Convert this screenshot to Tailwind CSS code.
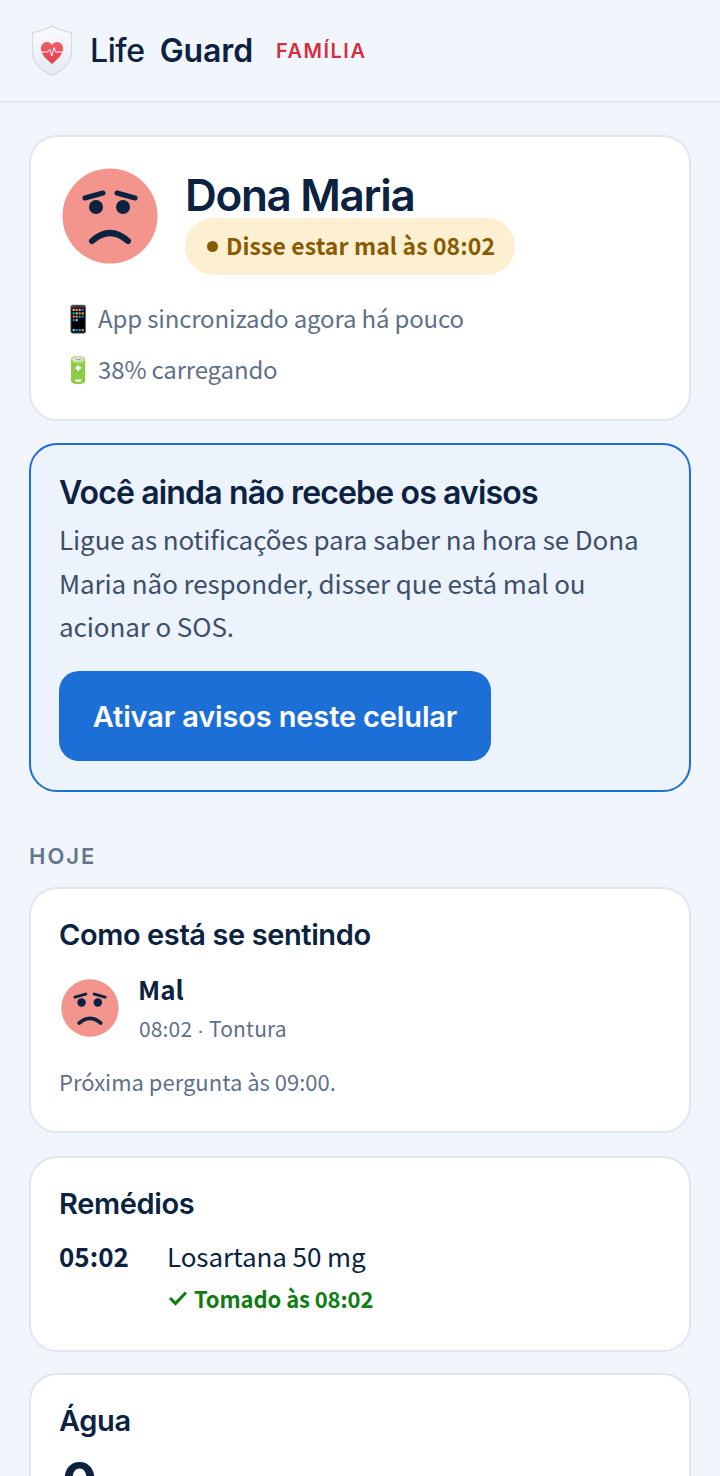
<!DOCTYPE html>
<html lang='pt-BR'>
<head>
	<meta charset='UTF-8'>
	<meta name='viewport' content='width=device-width, initial-scale=1.0'>
	<title>LifeGuard Família</title>
	<script src="https://cdn.jsdelivr.net/npm/@tailwindcss/browser@4"></script>
</head>
<body class='bg-[#f1f5fc] h-[1476px] overflow-hidden font-["Noto_Sans_CJK_SC",sans-serif] text-[#0b2240]'>
	<!-- Header -->
	<header class='h-[103px] border-b-2 border-[#e1e6ee] flex items-center pl-[31px]'>
		<svg width='42' height='52' viewBox='0 0 42 52' class='mr-[17px]'>
			<defs>
				<linearGradient id='shield' x1='0' y1='0' x2='0' y2='1'>
					<stop offset='0' stop-color='#fbfcfe'/>
					<stop offset='1' stop-color='#e3e9f2'/>
				</linearGradient>
				<linearGradient id='heart' x1='0' y1='0' x2='0' y2='1'>
					<stop offset='0' stop-color='#f2606a'/>
					<stop offset='1' stop-color='#e73c49'/>
				</linearGradient>
			</defs>
			<path d='M21 1 C27 4.500 33 6.500 40.500 7.500 V27 C40.500 38 31 46 21 50.500 C11 46 1.500 38 1.500 27 V7.500 C9 6.500 15 4.500 21 1Z' fill='url(#shield)' stroke='#d3d9e2' stroke-width='1.200'/>
			<path d='M21 39 C16 34.500 10 30 10 23.500 C10 19.500 13 17 16 17 C18.300 17 20 18.300 21 20 C22 18.300 23.700 17 26 17 C29 17 32 19.500 32 23.500 C32 30 26 34.500 21 39Z' fill='url(#heart)'/>
			<path d='M10.500 27 H17 L18.800 24 L20.800 31 L23 22.500 L24.800 27 H31.500' fill='none' stroke='#fff' stroke-width='1'/>
		</svg>
		<div class='font-["Inter",sans-serif] text-[32px] leading-none font-medium tracking-[-.4px]'>Life</div>
		<div class='font-["Inter",sans-serif] text-[32px] leading-none font-semibold ml-[15px] tracking-[-.1px]'>Guard</div>
		<div class='font-["Inter",sans-serif] text-[20px] leading-none font-semibold text-[#d32f3f] tracking-[1.5px] ml-[23px]'>FAMÍLIA</div>
	</header>

	<main class='px-[29px] pt-[32px] flex flex-col'>
		<!-- Status card -->
		<section class='bg-white border-2 border-[#e1e6ee] rounded-[28px] h-[286px] pl-[31px] pt-[31px]'>
			<div class='flex'>
				<svg width='96' height='96' viewBox='0 0 96 96' class='shrink-0'>
					<circle cx='48' cy='48' r='47.500' fill='#f3958d'/>
					<path d='M23 30 L41 25M73 30 L55 25' stroke='#0b2240' stroke-width='5' stroke-linecap='round' fill='none'/>
					<circle cx='34' cy='39' r='7' fill='#0b2240'/>
					<circle cx='61' cy='39' r='7' fill='#0b2240'/>
					<path d='M30 73 Q48 57 66 73' stroke='#0b2240' stroke-width='6' stroke-linecap='round' fill='none'/>
				</svg>
				<div class='ml-[27px]'>
					<h1 class='font-["Inter",sans-serif] mt-[2px] text-[44px] leading-[50px] font-semibold tracking-[-1.3px]'>Dona Maria</h1>
					<div class='mt-[-2px] h-[57px] w-[330px] rounded-full bg-[#fdf0d2] text-[#8a5a00] text-[23px] tracking-[.08px] font-bold flex items-center pl-[22px] pb-[3px]'>
						<span class='w-[11px] h-[11px] rounded-full bg-[#8a5a00] mr-[8px] mt-[3px]'></span>
						Disse estar mal às 08:02
					</div>
				</div>
			</div>
			<p class='mt-[17px] text-[24px] leading-[49.500px] text-[#5f7089] tracking-[-.16px]'><span class='text-[26px] mr-[-1px]'>📱</span> App sincronizado agora há pouco</p>
			<p class='text-[24px] leading-[49.500px] text-[#5f7089] tracking-[-.16px]'><span class='text-[26px] mr-[-1px]'>🔋</span> 38% carregando</p>
		</section>

		<!-- Notifications -->
		<section class='mt-[22px] bg-[#ecf3fd] border-2 border-[#1d6fd8] rounded-[28px] h-[349px] px-[28px] pt-[29px]'>
			<h2 class='font-["Inter",sans-serif] text-[32px] leading-[38px] font-semibold tracking-[-.85px]'>Você ainda não recebe os avisos</h2>
			<p class='text-[26px] leading-[43.500px] text-[#3d4f69] mt-[5px] tracking-[-.1px]'>Ligue as notificações para saber na hora se Dona Maria não responder, disser que está mal ou acionar o SOS.</p>
			<button class='mt-[23px] h-[90px] w-[432px] rounded-[20px] bg-[#1d6fd8] text-white font-["Inter",sans-serif] text-[29px] font-semibold tracking-[-.15px] pt-[2px]'>Ativar avisos neste celular</button>
		</section>

		<div class='font-["Inter",sans-serif] mt-[51px] text-[22px] leading-[26px] font-semibold tracking-[2px] text-[#64748b]'>HOJE</div>

		<!-- Feeling -->
		<section class='mt-[18px] bg-white border-2 border-[#e1e6ee] rounded-[28px] h-[246px] px-[28px] pt-[28px]'>
			<h2 class='font-["Inter",sans-serif] text-[29px] leading-[36px] font-semibold tracking-[-.4px]'>Como está se sentindo</h2>
			<div class='flex mt-[18px]'>
				<svg width='58' height='58' viewBox='0 0 96 96' class='shrink-0 mt-[8px] ml-[2px]'>
					<circle cx='48' cy='48' r='47.500' fill='#f3958d'/>
					<path d='M23 30 L41 25M73 30 L55 25' stroke='#0b2240' stroke-width='5' stroke-linecap='round' fill='none'/>
					<circle cx='34' cy='39' r='7' fill='#0b2240'/>
					<circle cx='61' cy='39' r='7' fill='#0b2240'/>
					<path d='M30 73 Q48 57 66 73' stroke='#0b2240' stroke-width='6' stroke-linecap='round' fill='none'/>
				</svg>
				<div class='ml-[20px]'>
					<div class='text-[26px] leading-[36px] font-bold ml-[-1px]'>Mal</div>
					<div class='text-[21px] leading-[30px] text-[#5f7089] mt-[6px] tracking-[.15px]'>08:02 <span class='font-["Liberation_Sans",sans-serif]'>·</span> Tontura</div>
				</div>
			</div>
			<p class='text-[22px] leading-[32px] text-[#5f7089] mt-[20px]'>Próxima pergunta às 09:00.</p>
		</section>

		<!-- Meds -->
		<section class='mt-[23px] bg-white border-2 border-[#e1e6ee] rounded-[28px] h-[196px] px-[28px] pt-[28px]'>
			<h2 class='font-["Inter",sans-serif] text-[29px] leading-[36px] font-semibold tracking-[-.35px]'>Remédios</h2>
			<div class='flex mt-[16px]'>
				<div class='w-[108px] text-[26px] leading-[36px] font-bold'>05:02</div>
				<div>
					<div class='text-[26px] leading-[36px] tracking-[-.1px]'>Losartana 50 mg</div>
					<div class='flex items-center mt-[7px] ml-[1px] text-[#0f7d12] text-[22px] leading-[34px] font-bold tracking-[-.1px]'>
						<svg width='20' height='16' viewBox='0 0 20 16' class='mr-[6px]'><path d='M2 8 L7.500 13.500 L18 2.500' stroke='#0f7d12' stroke-width='3' fill='none'/></svg>
						Tomado às 08:02
					</div>
				</div>
			</div>
		</section>

		<!-- Water -->
		<section class='mt-[21px] bg-white border-2 border-[#e1e6ee] rounded-[28px] h-[300px] px-[28px] pt-[28px]'>
			<h2 class='font-["Inter",sans-serif] text-[29px] leading-[36px] font-semibold tracking-[-.35px]'>Água</h2>
			<div class='font-["Inter",sans-serif] text-[52px] leading-[60px] font-bold mt-[13px] ml-[3px]'>0</div>
		</section>
	</main>
</body>
</html>
